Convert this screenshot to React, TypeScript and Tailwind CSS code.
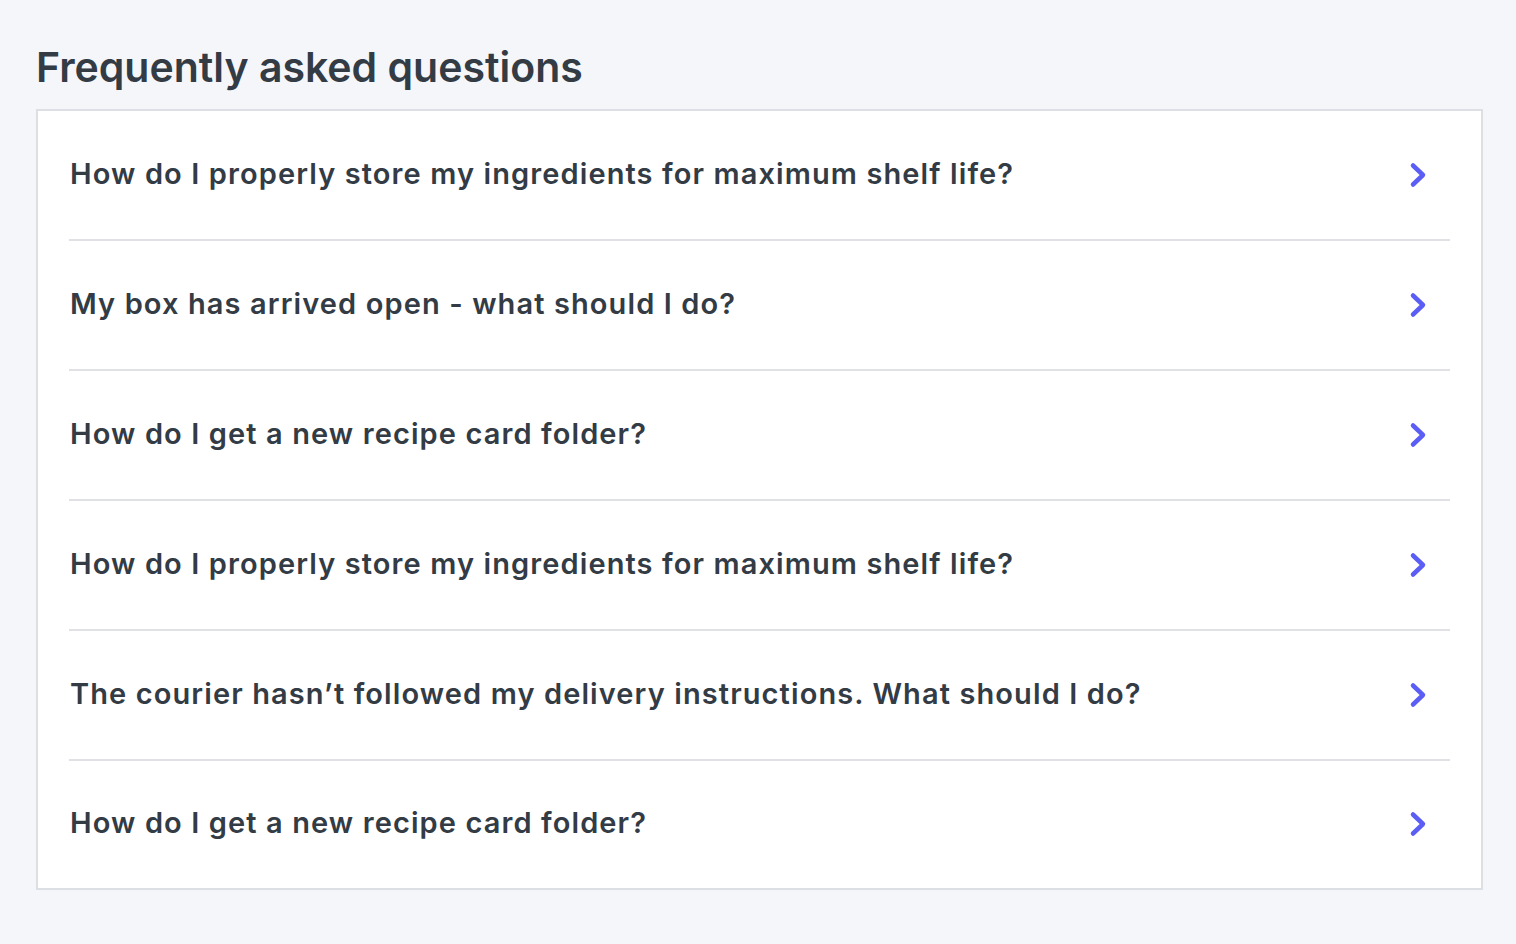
import React from 'react';

const questions = [
  'How do I properly store my ingredients for maximum shelf life?',
  'My box has arrived open - what should I do?',
  'How do I get a new recipe card folder?',
  'How do I properly store my ingredients for maximum shelf life?',
  'The courier hasn’t followed my delivery instructions. What should I do?',
  'How do I get a new recipe card folder?',
];

const Chevron = () => (
  <svg width="22" height="28" viewBox="0 0 22 28" fill="none" className="shrink-0 mr-[20px]">
    <polyline
      points="5,4.5 15,14 5,23.5"
      stroke="#5b5ef4"
      strokeWidth="4.5"
      strokeLinecap="round"
      strokeLinejoin="round"
    />
  </svg>
);

const App: React.FC = () => {
  return (
    <div className="min-h-screen bg-[#f5f6fa] px-[36px] pt-[39px] pb-[54px] font-['Inter',sans-serif] text-[#333b45]">
      <h1 className="text-[41px] leading-[56px] font-semibold mb-[14px]">Frequently asked questions</h1>
      <div className="bg-white border-2 border-[#dcdfe3] w-[1447px] px-[31px]">
        {questions.map((q, i) => {
          const last = i === questions.length - 1;
          return (
            <button
              key={i}
              className={`w-full flex items-center justify-between text-left ${
                last ? 'h-[127px] pb-[1px]' : 'h-[130px] border-b-2 border-[#dfe1e5]'
              }`}
            >
              <span className="text-[29px] font-semibold tracking-[1.1px] pl-[1px] pb-[2px]">{q}</span>
              <Chevron />
            </button>
          );
        })}
      </div>
    </div>
  );
};

export default App;
